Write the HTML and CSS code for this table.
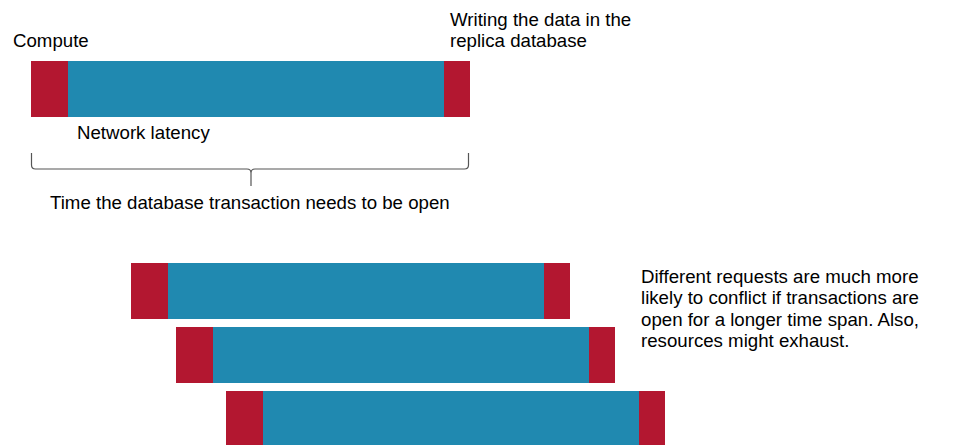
FILE: index.html
```html
<!DOCTYPE html>
<html lang="en">
<head>
<meta charset="utf-8">
<title>Transaction latency</title>
<link rel="stylesheet" href="styles.css">
</head>
<body>
<section class="top">
  <div class="labels">
    <div class="label label-compute">Compute</div>
    <div class="label label-write">Writing the data in the<br>replica database</div>
  </div>
  <div class="bar bar-main">
    <div class="seg red seg-start"></div>
    <div class="seg blue"></div>
    <div class="seg red seg-end"></div>
  </div>
  <div class="label label-net">Network latency</div>
  <svg class="brace" width="442" height="35" viewBox="0 0 442 35">
    <path d="M1.5 1 V13 Q1.5 17 5.5 17 H217 Q221 17 221 21 V34 M221 21 Q221 17 225 17 H434.5 Q438.5 17 438.5 13 V1" fill="none" stroke="#555555" stroke-width="1.2"/>
  </svg>
  <div class="label label-time">Time the database transaction needs to be open</div>
</section>
<section class="lower">
  <div class="bar bar-1">
    <div class="seg red seg-start"></div>
    <div class="seg blue"></div>
    <div class="seg red seg-end"></div>
  </div>
  <div class="bar bar-2">
    <div class="seg red seg-start"></div>
    <div class="seg blue"></div>
    <div class="seg red seg-end"></div>
  </div>
  <div class="bar bar-3">
    <div class="seg red seg-start"></div>
    <div class="seg blue"></div>
    <div class="seg red seg-end"></div>
  </div>
  <p class="note">Different requests are much more<br>likely to conflict if transactions are<br>open for a longer time span. Also,<br>resources might exhaust.</p>
</section>
</body>
</html>
```
FILE: styles.css
```css
html, body {
  margin: 0;
  padding: 0;
  background: #ffffff;
}
body {
  width: 966px;
  height: 445px;
  overflow: hidden;
  font-family: "Liberation Sans", Arial, sans-serif;
  font-size: 18.67px;
  line-height: 21.47px;
  color: #000000;
}
.top {
  padding-top: 9px;
}
.labels {
  display: grid;
  grid-template-columns: 450px auto;
  align-items: end;
}
.label {
  white-space: nowrap;
}
.label-compute {
  padding-left: 13px;
}
.bar {
  display: flex;
  width: 439px;
  height: 56px;
}
.bar-main {
  margin-top: 9px;
  margin-left: 31px;
}
.seg.red {
  background: #b31730;
}
.seg.blue {
  background: #2089b0;
  flex: 1;
}
.seg-start {
  width: 37px;
}
.seg-end {
  width: 26px;
}
.label-net {
  margin-top: 5px;
  margin-left: 77px;
}
.brace {
  display: block;
  margin-top: 9px;
  margin-left: 30px;
}
.label-time {
  margin-top: 5px;
  margin-left: 50px;
}
.lower {
  margin-top: 49px;
  display: grid;
  grid-template-columns: 641px auto;
  grid-template-rows: 56px 56px 56px;
  row-gap: 8px;
}
.bar-1 {
  grid-column: 1;
  grid-row: 1;
  margin-left: 131px;
}
.bar-2 {
  grid-column: 1;
  grid-row: 2;
  margin-left: 176px;
}
.bar-3 {
  grid-column: 1;
  grid-row: 3;
  margin-left: 226px;
}
.note {
  grid-column: 2;
  grid-row: 1 / 3;
  margin: 3px 0 0 0;
  white-space: nowrap;
}
```
